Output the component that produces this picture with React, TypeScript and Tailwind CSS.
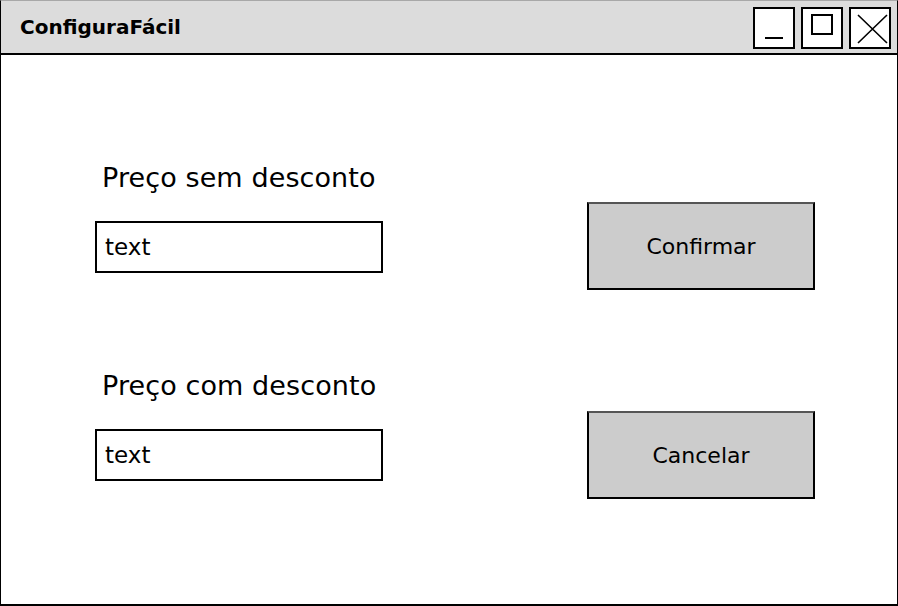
import React from "react";

const font = { fontFamily: '"DejaVu Sans", "Liberation Sans", sans-serif' };

function CtrlBox({ children }: { children?: React.ReactNode }) {
  return (
    <div className="relative w-[42px] h-[42px] border-2 border-black bg-white">{children}</div>
  );
}

function Field({ label }: { label: string }) {
  return (
    <div className="flex flex-col">
      <div className="text-[27px] leading-[32px] text-black pl-[7px] tracking-[0.1px]">{label}</div>
      <div className="mt-[27px] w-[288px] h-[52px] border-2 border-black bg-white flex items-center pl-[8px] text-[23px] text-black">
        text
      </div>
    </div>
  );
}

function Btn({ label }: { label: string }) {
  return (
    <div className="w-[228px] h-[88px] bg-[#cccccc] border-2 border-black border-t-[#555] flex items-center justify-center text-[22px] text-black">
      {label}
    </div>
  );
}

export default function App() {
  return (
    <div className="w-[898px] h-[606px] bg-white" style={font}>
      <div className="w-full h-full border-l border-r border-b-2 border-black border-t border-t-[#a8a8a8] flex flex-col">
        <div className="h-[54px] bg-[#dcdcdc] border-b-2 border-black flex items-center justify-between pl-[19px] pr-[6px]">
          <div className="text-[20px] font-bold text-black">ConfiguraFácil</div>
          <div className="flex gap-[6px] pt-[1px]">
            <CtrlBox>
              <div className="absolute left-[10px] top-[28px] w-[18px] h-[2px] bg-black" />
            </CtrlBox>
            <CtrlBox>
              <div className="absolute left-[8px] top-[5px] w-[22px] h-[21px] border-2 border-black" />
            </CtrlBox>
            <CtrlBox>
              <svg className="absolute left-0 top-0" width="38" height="38" viewBox="0 0 38 38">
                <path d="M7 6 L36 34 M36 6 L7 34" stroke="black" strokeWidth="1.6" fill="none" />
              </svg>
            </CtrlBox>
          </div>
        </div>
        <div className="flex flex-1 pl-[94px] pr-[82px]">
          <div className="flex flex-col pt-[107px] gap-[97px]">
            <Field label="Preço sem desconto" />
            <Field label="Preço com desconto" />
          </div>
          <div className="ml-auto flex flex-col pt-[147px] gap-[121px]">
            <Btn label="Confirmar" />
            <Btn label="Cancelar" />
          </div>
        </div>
      </div>
    </div>
  );
}
